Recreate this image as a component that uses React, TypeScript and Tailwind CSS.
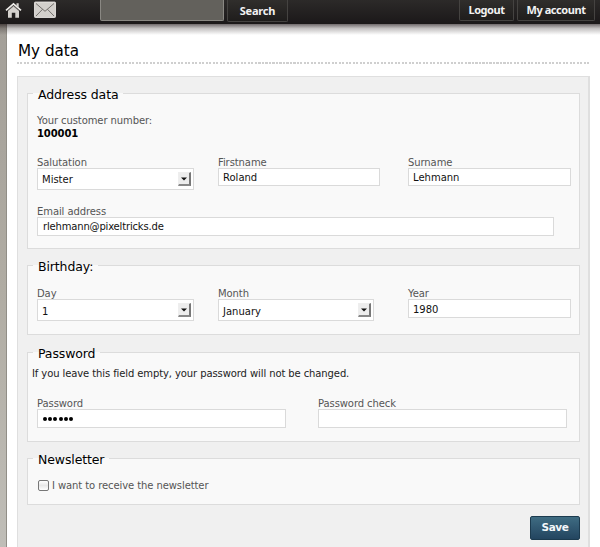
import type { ReactNode } from "react";

function Fieldset({ title, className, children }: { title: string; className: string; children: ReactNode }) {
  return (
    <fieldset className={`w-[553px] min-w-0 border border-[#dcdcdc] bg-[#f9f9f9] ${className}`}>
      <legend className="ml-[5px] h-[17px] px-[5px] text-[12.5px] leading-[19px] tracking-[-0.12px] whitespace-nowrap text-black">{title}</legend>
      {children}
    </fieldset>
  );
}

function Label({ children, className }: { children: ReactNode; className?: string }) {
  return <div className={`h-[13px] text-[10px] tracking-[-0.09px] whitespace-nowrap text-[#555] ${className ?? "leading-[15px]"}`}>{children}</div>;
}

function Field({ label, className, boxClass, textClass, value }: { label: string; className: string; boxClass?: string; textClass?: string; value: ReactNode }) {
  return (
    <div className={`shrink-0 ${className}`}>
      <Label>{label}</Label>
      <div className={`flex items-center border border-[#dadada] bg-white pl-[4px] ${boxClass ?? "h-[19px]"}`}>
        <span className={`text-[10px] leading-[13px] whitespace-nowrap text-[#111] ${textClass ?? ""}`}>{value}</span>
      </div>
    </div>
  );
}

function Select({ label, value, className, textClass }: { label: string; value: string; className: string; textClass?: string }) {
  return (
    <div className={`shrink-0 ${className}`}>
      <Label>{label}</Label>
      <div className="flex h-[22px] items-center justify-between border border-[#dadada] bg-white pr-[2px] pl-[4px]">
        <span className={`text-[10px] leading-[13px] whitespace-nowrap text-[#111] ${textClass ?? ""}`}>{value}</span>
        <span className="flex h-[14px] w-[13px] items-center justify-center border-t border-r-2 border-b-2 border-l border-t-[#eee] border-r-[#777] border-b-[#888] border-l-[#eee] bg-[#ededed]">
          <svg width="6" height="4" viewBox="0 0 6 4"><path d="M0 0.5h6L3 3.5z" fill="#111" /></svg>
        </span>
      </div>
    </div>
  );
}

function HeaderButton({ className, children }: { className: string; children: ReactNode }) {
  return (
    <div className={`flex justify-center rounded-b-[2px] border border-t-0 border-[#454341] bg-gradient-to-b from-[#302e2c] to-[#1f1d1c] font-['Noto_Sans'] text-[11px] font-bold whitespace-nowrap text-[#f2f2f2] ${className}`}>
      {children}
    </div>
  );
}

export default function App() {
  return (
    <div className="flex h-[547px] w-[600px] flex-col overflow-hidden bg-white font-['DejaVu_Sans',sans-serif]">
      <header className="flex h-[24px] shrink-0 items-start bg-gradient-to-b from-[#2c2a29] to-[#1b1819]">
        <svg className="mt-[2px] ml-[5px] shrink-0" width="17" height="17" viewBox="0 0 17 17">
          <path d="M3 8.3 8.5 3.7 14 8.3V15.8H10.3V10.7H6.8V15.8H3z" fill="#d5d2ce" />
          <path d="M11.5 1.3h2.2v4l-2.2-1.8z" fill="#d5d2ce" />
          <path d="M1 8.3 8.5 1.9 16 8.3" fill="none" stroke="#f0eeeb" strokeWidth="1.7" />
          <path d="M3 8.7 8.5 4 14 8.7" fill="none" stroke="#403d3a" strokeWidth=".6" />
        </svg>
        <svg className="mt-[1px] ml-[12px] shrink-0" width="22" height="17" viewBox="0 0 22 17">
          <rect x=".5" y="1" width="21" height="15.5" rx=".8" fill="#d3d0cc" stroke="#f0eeeb" strokeWidth=".8" />
          <path d="M2 2.5 11 10.3 20 2.5M2 15 8.5 8.3M20 15 13.5 8.3" fill="none" stroke="#666360" strokeWidth=".9" />
        </svg>
        <div className="ml-[44px] h-[21px] w-[124px] rounded-b-[2px] border border-t-0 border-[#8a8883] bg-[#63615c]" />
        <HeaderButton className="ml-[3px] h-[22px] w-[61px] leading-[22px] tracking-[-0.2px]">Search</HeaderButton>
        <HeaderButton className="ml-[171px] h-[21px] w-[55px] leading-[20px] tracking-[-0.45px]">Logout</HeaderButton>
        <HeaderButton className="ml-[3px] h-[21px] w-[78px] leading-[20px] tracking-[-0.45px]">My account</HeaderButton>
      </header>
      <div className="relative h-[11px] shrink-0 bg-gradient-to-b from-[#0f0507]/60 via-[#0f0507]/25 via-40% to-transparent" />
      <div className="-mt-[11px] flex grow">
        <div className="w-[7px] shrink-0 border-r border-[#918e87] bg-gradient-to-b from-[#a39f98] via-[#b0aca3] to-[#c0beb8]" />
        <main className="flex flex-col pl-[10px]">
          <h1 className="mt-[16px] h-[22px] pl-[1px] text-[15.2px] leading-[22px] whitespace-nowrap text-black">My data</h1>
          <div className="h-[2px] w-[573px] bg-[repeating-linear-gradient(90deg,#cfcfcf_0_2px,#fff_2px_3.5px)]" />
          <section className="mt-[12px] h-[480px] w-[573px] border border-r-2 border-[#dfdfdf] bg-[#f0f0f0] pt-[8px] pl-[9px]">
            <Fieldset title="Address data" className="h-[164px]">
              <div className="flex flex-col pt-[11px] pl-[9px]">
                <Label>Your customer number:</Label>
                <div className="h-[13px] text-[10px] leading-[15px] font-bold tracking-[-0.1px] text-black">100001</div>
                <div className="mt-[16px] flex">
                  <Select label="Salutation" className="w-[157px]" value="Mister" />
                  <Field label="Firstname" className="ml-[24px] w-[162px]" boxClass="h-[18px]" value="Roland" />
                  <Field label="Surname" className="ml-[28px] w-[163px]" boxClass="h-[18px]" value="Lehmann" />
                </div>
                <Field label="Email address" className="mt-[14px] w-[517px]" textClass="tracking-[-0.17px] pl-[1px]" value="rlehmann@pixeltricks.de" />
              </div>
            </Fieldset>
            <Fieldset title="Birthday:" className="mt-[8px] h-[78px]">
              <div className="flex pt-[12px] pl-[9px]">
                <Select label="Day" className="w-[157px]" textClass="pt-[2px]" value="1" />
                <Select label="Month" className="ml-[24px] w-[156px]" textClass="pt-[2px]" value="January" />
                <Field label="Year" className="ml-[34px] w-[163px]" textClass="pt-[2px]" value="1980" />
              </div>
            </Fieldset>
            <Fieldset title="Password" className="mt-[9px] h-[98px]">
              <p className="pt-[6px] pl-[4px] text-[10px] leading-[13px] tracking-[-0.1px] whitespace-nowrap text-[#222]">If you leave this field empty, your password will not be changed.</p>
              <div className="mt-[16px] flex pl-[9px]">
                <Field label="Password" className="w-[249px]" value={<span className="flex gap-[1.2px] pl-[1px]">{[0, 1, 2, 3, 4, 5].map((i) => <i key={i} className="size-[4px] rounded-full bg-black" />)}</span>} />
                <Field label="Password check" className="ml-[32px] w-[249px]" value="" />
              </div>
            </Fieldset>
            <Fieldset title="Newsletter" className="mt-[8px] h-[55px]">
              <div className="flex items-center px-[10px] pt-[12px]">
                <span className="size-[11px] rounded-[2px] border border-[#777] bg-gradient-to-b from-white via-[#e8e8e8] to-white" />
                <Label className="ml-[3px] leading-[13px]">I want to receive the newsletter</Label>
              </div>
            </Fieldset>
            <div className="mt-[11px] ml-[503px] flex h-[24px] w-[50px] items-center justify-center rounded-[2px] border border-[#1c3b4f] bg-gradient-to-b from-[#3f6c82] to-[#234560] text-[10.5px] font-bold tracking-[-0.4px] text-[#f4f7f9]">Save</div>
          </section>
        </main>
      </div>
    </div>
  );
}
